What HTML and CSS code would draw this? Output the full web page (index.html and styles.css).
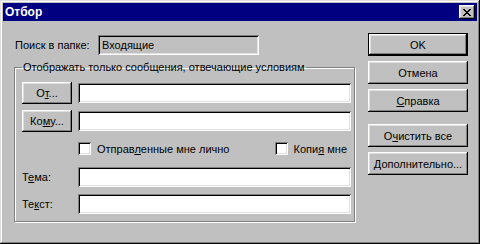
FILE: index.html
```html
<!DOCTYPE html>
<html lang="ru">
<head>
    <meta charset="UTF-8">
    <title>Отбор</title>
    <link rel="stylesheet" href="styles.css">
</head>
<body>
    <div class="window">
        <!-- заголовок окна -->
        <div class="titlebar">
            <span class="title">Отбор</span>
            <button class="close-btn" type="button">
                <svg width="8" height="7" viewBox="0 0 8 7">
                    <path d="M0 0h2v1h1v1h2V1h1V0h2v1H7v1H6v1H5v1h1v1h1v1h1v1H6V6H5V5H3v1H2v1H0V6h1V5h1V4h1V3H2V2H1V1H0z" fill="#000"/>
                </svg>
            </button>
        </div>

        <div class="content">
            <div class="main">
                <div class="folder-row">
                    <span class="folder-label">Поиск в папке:</span>
                    <div class="field readonly">Входящие</div>
                </div>

                <fieldset class="group">
                    <legend>Отображать только сообщения, отвечающие условиям</legend>

                    <div class="row">
                        <button class="btn small" type="button">О<u>т</u>...</button>
                        <div class="field"></div>
                    </div>
                    <div class="row">
                        <button class="btn small" type="button">Ко<u>м</u>у...</button>
                        <div class="field"></div>
                    </div>

                    <div class="check-row">
                        <label class="check"><span class="box"></span><span>Отправ<u>л</u>енные мне лично</span></label>
                        <label class="check"><span class="box"></span><span>Копи<u>я</u> мне</span></label>
                    </div>

                    <div class="row text-row">
                        <span class="row-label">Т<u>е</u>ма:</span>
                        <div class="field"></div>
                    </div>
                    <div class="row text-row">
                        <span class="row-label">Те<u>к</u>ст:</span>
                        <div class="field"></div>
                    </div>
                </fieldset>
            </div>

            <!-- кнопки справа -->
            <div class="side">
                <button class="btn default" type="button">OK</button>
                <button class="btn" type="button">Отмена</button>
                <button class="btn" type="button"><u>С</u>правка</button>
                <button class="btn spaced" type="button">О<u>ч</u>истить все</button>
                <button class="btn" type="button"><u>Д</u>ополнительно...</button>
            </div>
        </div>
    </div>
</body>
</html>
```

FILE: styles.css
```css
* {
    box-sizing: border-box;
}

body {
    margin: 0;
    background: #c0c0c0;
    font-family: "Liberation Sans", Arial, sans-serif;
    font-size: 11px;
    color: #000;
}

u {
    text-decoration: underline;
    text-underline-offset: 1px;
}

/* окно */
.window {
    width: 480px;
    height: 244px;
    padding: 3px;
    background: #c0c0c0;
    display: flex;
    flex-direction: column;
    box-shadow: inset -1px -1px #000, inset 1px 1px #dfdfdf,
                inset -2px -2px #808080, inset 2px 2px #fff;
}

.titlebar {
    height: 18px;
    background: #000080;
    color: #fff;
    display: flex;
    align-items: center;
    justify-content: space-between;
    padding: 0 2px 0 2px;
}

.title {
    font-weight: bold;
    font-size: 12px;
}

.close-btn {
    width: 16px;
    height: 14px;
    padding: 0;
    border: none;
    background: #c0c0c0;
    display: flex;
    align-items: center;
    justify-content: center;
    box-shadow: inset -1px -1px #000, inset 1px 1px #fff,
                inset -2px -2px #808080, inset 2px 2px #dfdfdf;
}

.content {
    flex: 1;
    display: flex;
}

.main {
    width: 365px;
    padding: 14px 0 0 11px;
}

/* поле "Поиск в папке" */
.folder-row {
    display: flex;
    align-items: center;
    padding-left: 1px;
}

.folder-label {
    width: 83px;
}

.field {
    height: 20px;
    background: #fff;
    flex: 1;
    padding: 3px 4px;
    line-height: 14px;
    box-shadow: inset 1px 1px #808080, inset -1px -1px #fff,
                inset 2px 2px #000, inset -2px -2px #dfdfdf;
}

.field.readonly {
    flex: none;
    width: 161px;
    background: #c0c0c0;
}

/* группа условий */
.group {
    width: 341px;
    margin: 5px 0 0 0;
    padding: 8px 3px 7px 7px;
    border: 1px solid #808080;
    box-shadow: inset 1px 1px #fff, 1px 1px #fff;
    min-width: 0;
}

.group legend {
    padding: 0 1px;
    line-height: 14px;
}

.row {
    display: flex;
    align-items: center;
    gap: 6px;
    margin-bottom: 6px;
}

.text-row {
    margin-bottom: 7px;
}

.text-row:last-child {
    margin-bottom: 0;
}

.row-label {
    width: 50px;
}

.check-row {
    display: flex;
    justify-content: space-between;
    margin: 10px 4px 12px 56px;
}

.check {
    display: flex;
    align-items: center;
    gap: 6px;
    height: 13px;
}

.box {
    width: 13px;
    height: 13px;
    background: #fff;
    box-shadow: inset 1px 1px #808080, inset -1px -1px #fff,
                inset 2px 2px #000, inset -2px -2px #dfdfdf;
}

/* кнопки */
.btn {
    height: 23px;
    padding: 0;
    border: none;
    background: #c0c0c0;
    font-family: inherit;
    font-size: 11px;
    font-weight: normal;
    color: #000;
    box-shadow: inset -1px -1px #000, inset 1px 1px #fff,
                inset -2px -2px #808080, inset 2px 2px #dfdfdf;
}

.btn.small {
    width: 50px;
    height: 22px;
    flex: none;
}

.btn.default {
    border: 1px solid #000;
}

.side {
    width: 100px;
    padding-top: 12px;
    display: flex;
    flex-direction: column;
    gap: 5px;
}

.side .spaced {
    margin-top: 7px;
}
```
